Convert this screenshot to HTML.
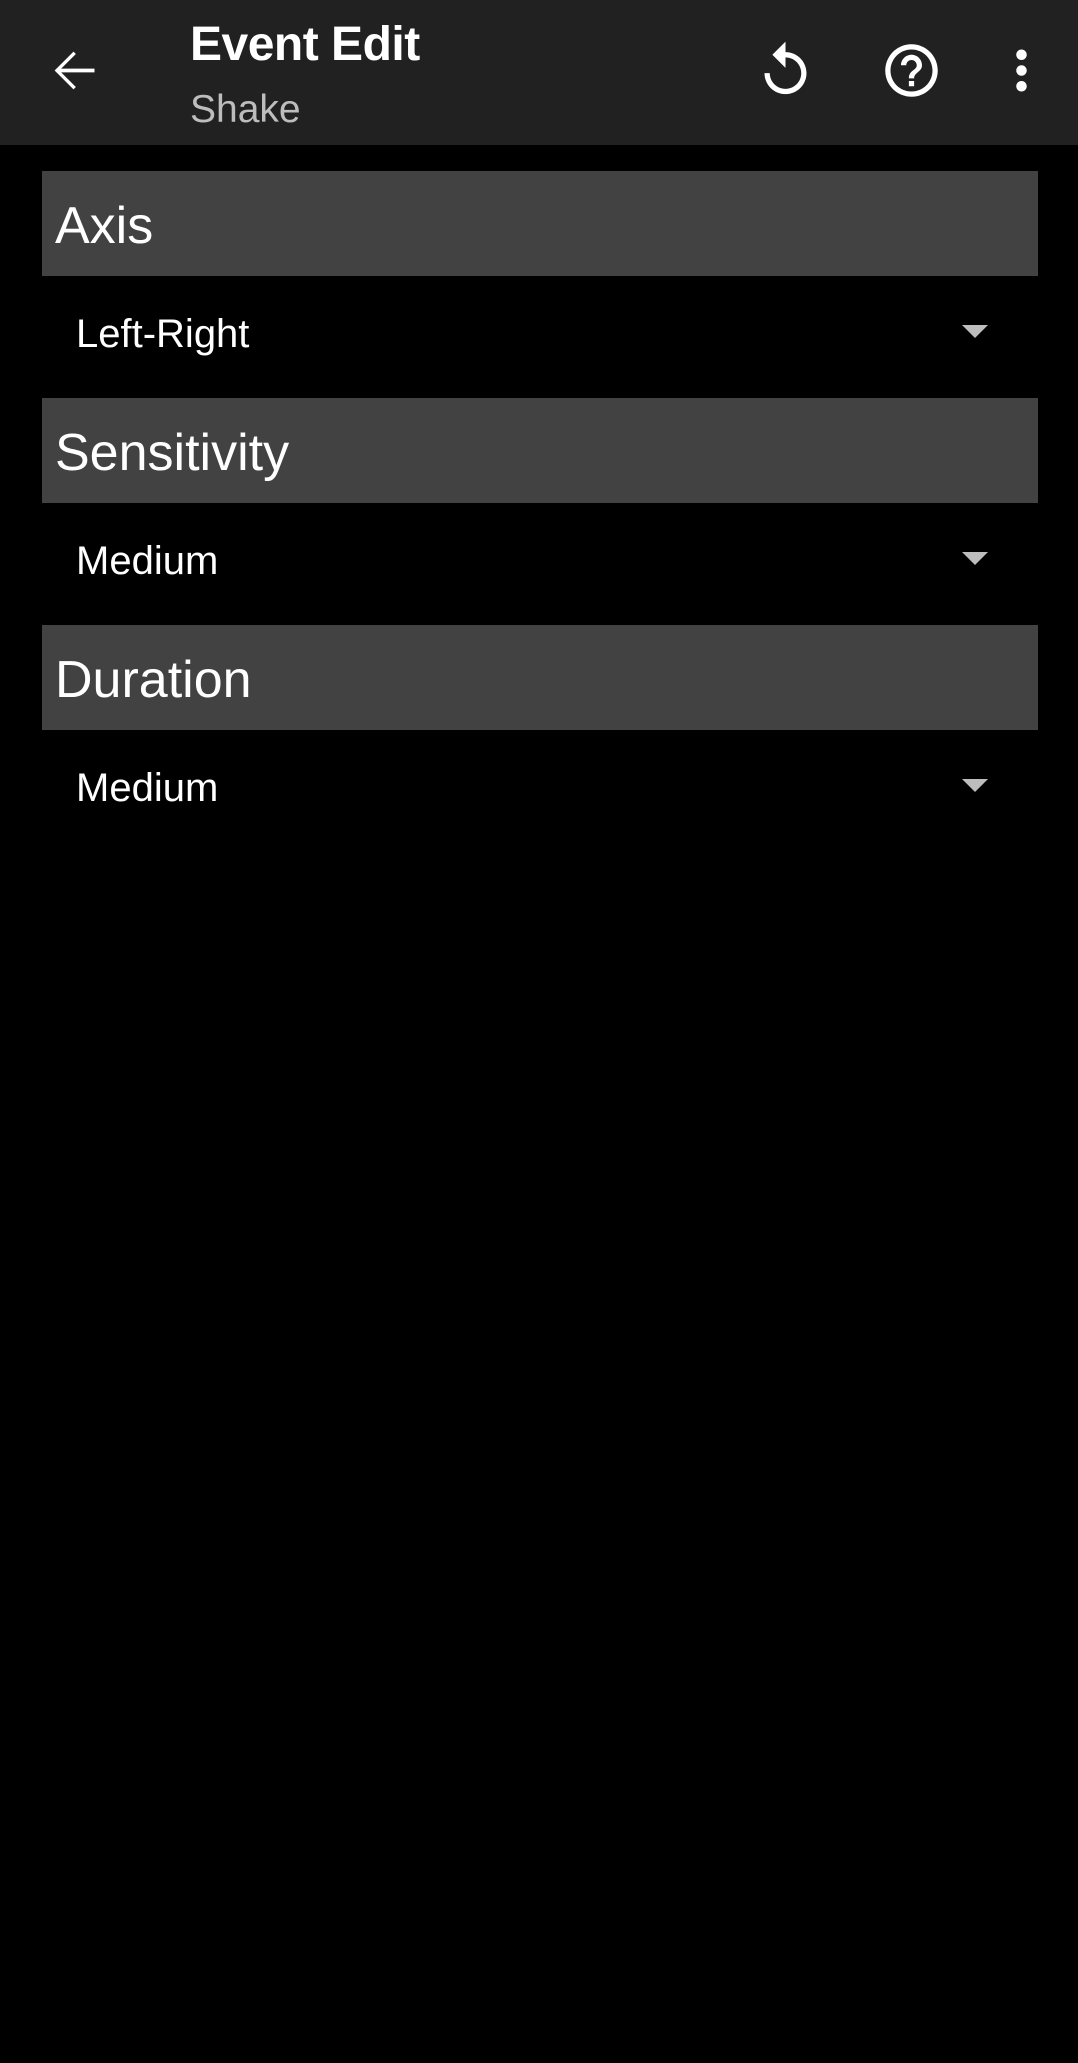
<!DOCTYPE html>
<html><head><meta charset="utf-8"><style>
body{margin:0;width:1078px;height:2063px;background:#000;font-family:"Liberation Sans",sans-serif;position:relative;overflow:hidden}
.bar{position:absolute;left:0;top:0;width:1078px;height:145px;background:#212121}
.ic{position:absolute;width:63px;height:63px}
.t1{position:absolute;left:190px;top:17px;color:#fff;font-size:48px;font-weight:bold;letter-spacing:-0.5px}
.t2{position:absolute;left:190px;top:88px;color:#bdbdbd;font-size:39px}
.hd{position:absolute;left:42px;width:996px;height:105px;background:#424242;color:#fff;font-size:52px;line-height:111px;text-indent:13px}
.val{position:absolute;left:76px;color:#fff;font-size:40px;line-height:50px}
.tri{position:absolute;left:962px;width:0;height:0;border-left:13px solid transparent;border-right:13px solid transparent;border-top:13px solid #bdbdbd}
</style></head><body>
<div class="bar"></div>
<svg class="ic" style="left:42px;top:39px" viewBox="0 0 24 24"><path fill="#fff" d="M20 11.3H7.3l5.6-5.6-.9-.9-7.2 7.2 7.2 7.2.9-.9-5.6-5.6H20v-1.4z"/></svg>
<div class="t1">Event Edit</div>
<div class="t2">Shake</div>
<svg class="ic" style="left:754px;top:39px" viewBox="0 0 24 24"><path fill="#fff" d="M12 5V1L7 6l5 5V7c3.31 0 6 2.69 6 6s-2.69 6-6 6-6-2.69-6-6H4c0 4.42 3.58 8 8 8s8-3.58 8-8-3.58-8-8-8z"/></svg>
<svg class="ic" style="left:880px;top:39px" viewBox="0 0 24 24"><path fill="#fff" d="M11 18h2v-2h-2v2zm1-16C6.48 2 2 6.48 2 12s4.48 10 10 10 10-4.48 10-10S17.52 2 12 2zm0 18c-4.41 0-8-3.590-8-8s3.59-8 8-8 8 3.59 8 8-3.59 8-8 8zm0-14c-2.21 0-4 1.79-4 4h2c0-1.1.9-2 2-2s2 .9 2 2c0 2-3 1.75-3 5h2c0-2.25 3-2.5 3-5 0-2.21-1.79-4-4-4z"/></svg>
<svg class="ic" style="left:990px;top:39px" viewBox="0 0 24 24"><path fill="#fff" d="M12 8c1.1 0 2-.9 2-2s-.9-2-2-2-2 .9-2 2 .9 2 2 2zm0 2c-1.1 0-2 .9-2 2s.9 2 2 2 2-.9 2-2-.9-2-2-2zm0 6c-1.1 0-2 .9-2 2s.9 2 2 2 2-.9 2-2-.9-2-2-2z"/></svg>

<div class="hd" style="top:171px">Axis</div>
<div class="val" style="top:309px">Left-Right</div>
<div class="tri" style="top:325px"></div>

<div class="hd" style="top:398px">Sensitivity</div>
<div class="val" style="top:536px">Medium</div>
<div class="tri" style="top:552px"></div>

<div class="hd" style="top:625px">Duration</div>
<div class="val" style="top:763px">Medium</div>
<div class="tri" style="top:779px"></div>
</body></html>
